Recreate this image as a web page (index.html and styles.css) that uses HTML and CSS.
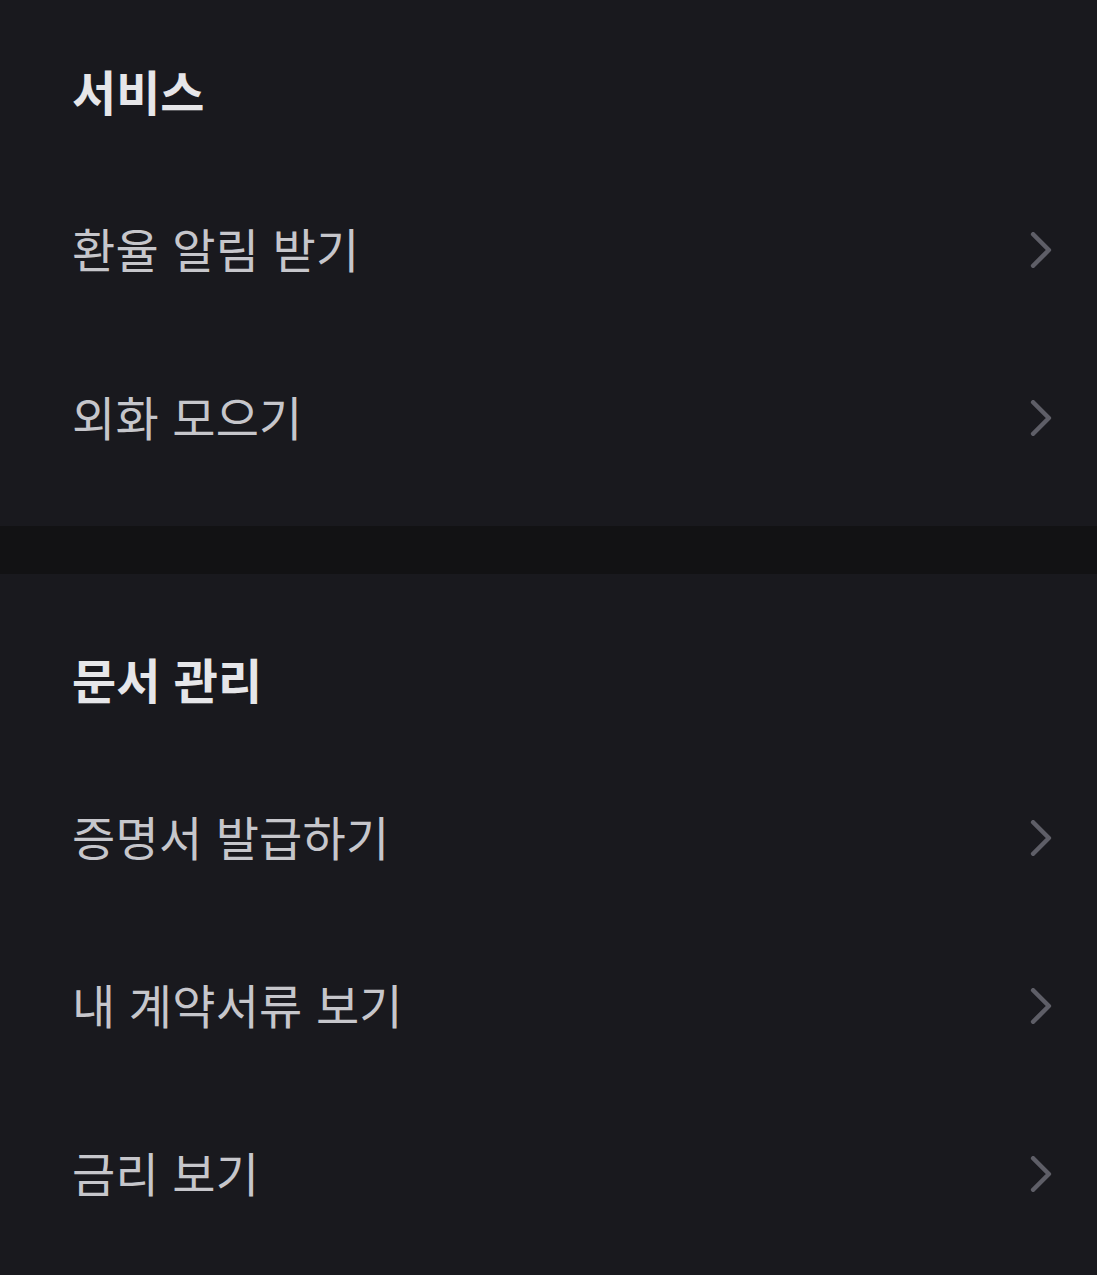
FILE: index.html
```html
<!DOCTYPE html>
<html lang="ko">
<head>
    <meta charset="UTF-8">
    <meta name="viewport" content="width=device-width, initial-scale=1.0">
    <title>메뉴</title>
    <link rel="stylesheet" href="styles.css">
</head>
<body>
    <div class="menu">
        <section class="section">
            <h2 class="section-title">서비스</h2>
            <a class="menu-item" href="#">
                <span class="label">환율 알림 받기</span>
                <svg class="chevron" viewBox="0 0 18 32"><path d="M2 2 L16 16 L2 30"/></svg>
            </a>
            <a class="menu-item" href="#">
                <span class="label">외화 모으기</span>
                <svg class="chevron" viewBox="0 0 18 32"><path d="M2 2 L16 16 L2 30"/></svg>
            </a>
        </section>

        <div class="divider"></div>

        <section class="section">
            <h2 class="section-title">문서 관리</h2>
            <a class="menu-item" href="#">
                <span class="label">증명서 발급하기</span>
                <svg class="chevron" viewBox="0 0 18 32"><path d="M2 2 L16 16 L2 30"/></svg>
            </a>
            <a class="menu-item" href="#">
                <span class="label">내 계약서류 보기</span>
                <svg class="chevron" viewBox="0 0 18 32"><path d="M2 2 L16 16 L2 30"/></svg>
            </a>
            <a class="menu-item" href="#">
                <span class="label">금리 보기</span>
                <svg class="chevron" viewBox="0 0 18 32"><path d="M2 2 L16 16 L2 30"/></svg>
            </a>
        </section>
    </div>
</body>
</html>
```

FILE: styles.css
```css
:root {
    --bg: #19191e;
    --bg-band: #121214;
    --title: #e6e6e9;
    --text: #c6c6cb;
    --chevron: #5e5e67;
}
* {
    box-sizing: border-box;
}
body {
    margin: 0;
    background: var(--bg);
    font-family: "Noto Sans CJK KR", "Noto Sans", sans-serif;
}
.menu {
    display: flex;
    flex-direction: column;
}
.section {
    padding: 24px 0;
}
.section:first-child {
    padding-top: 10px;
}
.section-title {
    margin: 0;
    height: 156px;
    padding: 4px 72px 0;
    display: flex;
    align-items: center;
    font-size: 48px;
    font-weight: 700;
    letter-spacing: 0;
    color: var(--title);
}
.menu-item {
    height: 168px;
    padding: 0 45px 0 72px;
    display: flex;
    align-items: center;
    justify-content: space-between;
    text-decoration: none;
    font-size: 47px;
    font-weight: 400;
    letter-spacing: 0.2px;
    color: var(--text);
}
.label {
    display: block;
    padding-bottom: 6px;
}
.chevron {
    width: 22px;
    height: 36px;
    fill: none;
    stroke: var(--chevron);
    stroke-width: 4;
    stroke-linecap: round;
    stroke-linejoin: round;
}
.divider {
    height: 48px;
    background: var(--bg-band);
}
```
